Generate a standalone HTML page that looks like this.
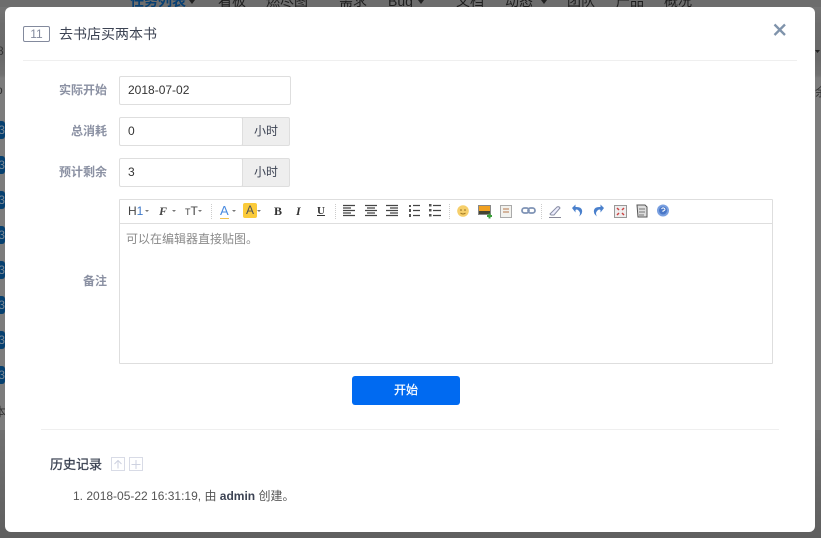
<!DOCTYPE html>
<html><head><meta charset="utf-8">
<style>
*{box-sizing:border-box}
html,body{margin:0;padding:0;width:821px;height:538px;overflow:hidden;background:#7b7b7b;font-family:"Liberation Sans","Noto Sans CJK SC",sans-serif;font-size:12px;color:#333}
.a{position:absolute;white-space:nowrap}
.nav{position:absolute;top:-9px;font-size:14px;color:#1e1e1e;line-height:20px;white-space:nowrap}
.badge{position:absolute;left:-14px;width:19px;height:18px;border-radius:3px;background:#06406f;color:#7b8794;font-size:12px;line-height:18px;text-align:right;padding-right:0}
.lab{position:absolute;width:48px;text-align:right;left:59px;color:#8b91a3;font-weight:bold;font-size:12px;line-height:18px;white-space:nowrap}
.inp{position:absolute;left:119px;height:29px;background:#fff;border:1px solid #dedede;border-radius:2px;padding-left:8px;line-height:26px;color:#333;font-size:12px}
.addon{position:absolute;left:242px;width:48px;height:29px;background:#eee;border:1px solid #dedede;border-radius:0 2px 2px 0;text-align:center;line-height:27px;color:#3c4353}
</style></head><body>
<div class="a" style="left:0;top:0;width:821px;height:430px;background:linear-gradient(#777 0,#6c6c6c 25px,#6a6a6a 60px,#717171 75px,#7c7c7c 78px,#7c7c7c 430px)"></div>
<div class="a" style="left:0;top:430px;width:821px;height:108px;background:linear-gradient(#707070,#5f5f5f)"></div>
<div class="a" style="left:0;top:0;width:821px;height:7px;background:#6d6d6d"></div>
<div class="nav" style="left:130px;color:#063f73;font-weight:bold">任务列表</div>
<div class="nav" style="left:218px">看板</div>
<div class="nav" style="left:266px">燃尽图</div>
<div class="nav" style="left:339px">需求</div>
<div class="nav" style="left:388px">Bug</div>
<div class="nav" style="left:456px">文档</div>
<div class="nav" style="left:505px">动态</div>
<div class="nav" style="left:567px">团队</div>
<div class="nav" style="left:616px">产品</div>
<div class="nav" style="left:664px">概况</div>
<svg class="a" style="left:0;top:0" width="821" height="7"><path d="M189 0h6l-3 4zM418 0h6l-3 4zM541 0h6l-3 4z" fill="#222"/></svg>
<div class="badge" style="top:121px">3</div><div class="badge" style="top:156px">3</div><div class="badge" style="top:191px">3</div><div class="badge" style="top:226px">3</div><div class="badge" style="top:261px">3</div><div class="badge" style="top:296px">3</div><div class="badge" style="top:331px">3</div><div class="badge" style="top:366px">3</div>
<div class="a" style="left:-3px;top:42px;font-size:12px;line-height:18px;color:#333">8</div>
<div class="a" style="left:-4px;top:81px;font-size:12px;line-height:18px;color:#333">p</div>
<div class="a" style="left:-6px;top:403px;font-size:12px;line-height:18px;color:#333">本</div>
<div class="a" style="left:815px;top:83px;font-size:12px;line-height:18px;color:#333">余</div>
<svg class="a" style="left:815px;top:50px" width="6" height="6"><path d="M0 0h5l-2.500 3z" fill="#222"/></svg>

<div class="a" style="left:5px;top:7px;width:810px;height:525px;background:#fff;border-radius:6px"></div>

<div class="a" style="left:23px;top:26px;width:27px;height:16px;border:1px solid #838a9d;border-radius:2px;text-align:center;line-height:14px;color:#838a9d;font-size:12px">11</div>
<div class="a" style="left:59px;top:25px;font-size:14px;line-height:18px;color:#3c4353">去书店买两本书</div>
<svg class="a" style="left:773px;top:23px" width="14" height="14" viewBox="0 0 14 14"><path d="M1.500 1.500 L12 12 M12 1.500 L1.500 12" stroke="#7f93ab" stroke-width="2.300" fill="none"/></svg>
<div class="a" style="left:23px;top:60px;width:774px;height:1px;background:#efefef"></div>

<div class="lab" style="top:81px">实际开始</div>
<div class="inp" style="top:76px;width:172px">2018-07-02</div>
<div class="lab" style="top:122px">总消耗</div>
<div class="inp" style="top:117px;width:124px">0</div><div class="addon" style="top:117px">小时</div>
<div class="lab" style="top:163px">预计剩余</div>
<div class="inp" style="top:158px;width:124px">3</div><div class="addon" style="top:158px">小时</div>
<div class="lab" style="top:272px">备注</div>

<div class="a" style="left:119px;top:199px;width:654px;height:165px;border:1px solid #dedede;border-radius:1px;background:#fff"></div>
<div class="a" style="left:120px;top:223px;width:652px;height:1px;background:#dedede"></div>
<div class="a" style="left:126px;top:230px;color:#8a8a8a;font-size:12px;line-height:18px">可以在编辑器直接贴图。</div>

<div class="a" style="left:128px;top:203px;font-size:12px;line-height:16px;color:#444">H<span style="color:#3d78c9">1</span></div>
<div class="a" style="left:159px;top:203px;font-size:12px;line-height:16px;color:#444;font-family:'Liberation Serif',serif;font-style:italic;font-weight:bold">F</div>
<div class="a" style="left:185px;top:203px;line-height:16px;color:#444"><span style="font-size:9px">T</span><span style="font-size:12px">T</span></div>
<div class="a" style="left:220px;top:203px;line-height:15px;font-size:13px;color:#4a8be0;border-bottom:1px solid #f2c14e;height:16px">A</div>
<div class="a" style="left:243px;top:203px;width:14px;height:15px;background:#fbcb3a;border-radius:2px;text-align:center;line-height:15px;font-size:12px;color:#555">A</div>
<div class="a" style="left:274px;top:203px;line-height:16px;font-size:12px;font-weight:bold;font-family:'Liberation Serif',serif;color:#333">B</div>
<div class="a" style="left:296px;top:203px;line-height:16px;font-size:12px;font-weight:bold;font-style:italic;font-family:'Liberation Serif',serif;color:#333">I</div>
<div class="a" style="left:317px;top:203px;line-height:16px;font-size:11px;font-weight:bold;font-family:'Liberation Serif',serif;color:#333;text-decoration:underline">U</div>

<svg class="a" style="left:120px;top:200px" width="652" height="23" viewBox="120 200 652 23">
 <g fill="#777"><path d="M145 210l4 0-2 2zM172 210l4 0-2 2zM198 210l4 0-2 2zM232 210l4 0-2 2zM257 210l4 0-2 2z"/></g>
 <g stroke="#ccc" stroke-dasharray="1 1" fill="none"><path d="M211.500 204V219M335.500 204V219M449.500 204V219M541.500 204V219"/></g>
 <g stroke="#444" stroke-width="1.200" fill="none">
  <path d="M343 205.500h12M343 208h8M343 210.500h12M343 213h8M343 215.500h12"/>
  <path d="M365 205.500h12M367 208h8M365 210.500h12M367 213h8M365 215.500h12"/>
  <path d="M386 205.500h12M390 208h8M386 210.500h12M390 213h8M386 215.500h12"/>
  <path d="M413 205.500h7M413 210.500h7M413 215.500h7"/>
  <path d="M433 205.500h8M433 210.500h8M433 215.500h8"/>
 </g>
 <g fill="#555"><rect x="409" y="205" width="2" height="2"/><rect x="409" y="209" width="2" height="3"/><rect x="409" y="214" width="2" height="3"/><rect x="429" y="204" width="2.500" height="2.500"/><rect x="429" y="209" width="2.500" height="2.500"/><rect x="429" y="214" width="2.500" height="2.500"/></g>
 <circle cx="463" cy="211" r="5.800" fill="#f6cf6b"/><circle cx="461" cy="210" r=".8" fill="#8a6a20"/><circle cx="465" cy="210" r=".8" fill="#8a6a20"/><path d="M460.500 213q2.500 2 5 0" stroke="#a07820" fill="none"/>
 <rect x="478" y="205" width="13" height="10" fill="#888"/><rect x="479" y="206" width="11" height="5" fill="#f0a020"/><rect x="479" y="211" width="11" height="3" fill="#443"/><path d="M487 216h5M489.500 213.500v5" stroke="#3aa03a" stroke-width="2"/>
 <rect x="500.500" y="205.500" width="11" height="12" fill="#f2f2ee" stroke="#aaa"/><path d="M503 209h6M503 212h6" stroke="#c9a080" stroke-width="1.500"/>
 <g fill="none" stroke="#7f93b5" stroke-width="1.800"><rect x="522" y="208" width="7" height="5" rx="2.500"/><rect x="528" y="208" width="7" height="5" rx="2.500"/></g>
 <path d="M550 214l7-7q2-1 3 1l-6 7h-3z" fill="#eef" stroke="#8a8fa5"/><path d="M549 217.500h12" stroke="#889"/>
 <path d="M572 208l3.500-3.500v2.500q5.500-.5 6.500 3t-3 6.500q2-3 0-5.500t-3.500-1v2.500z" fill="#4a80cc"/>
 <path d="M604 208l-3.500-3.500v2.500q-5.500-.5-6.500 3t3 6.500q-2-3 0-5.500t3.500-1v2.500z" fill="#4a80cc"/>
 <rect x="614.500" y="205.500" width="12" height="12" fill="#eee" stroke="#999"/><path d="M617 208l2 2M624 208l-2 2M617 215l2-2M624 215l-2-2" stroke="#c44" stroke-width="1.500"/>
 <path d="M637 205h8l2 2v10h-9z" fill="#ddd" stroke="#555"/><path d="M639 209h6M639 212h6M639 215h5" stroke="#777"/>
 <circle cx="663" cy="210.500" r="6" fill="#7aa0e0"/><circle cx="663" cy="210.500" r="4" fill="#4a78c8"/><path d="M661.500 209q1.500-2 3 -.5t-1.500 2.500v1" stroke="#fff" fill="none"/>
</svg>

<div class="a" style="left:352px;top:376px;width:108px;height:29px;background:#006af1;border-radius:3px;color:#fff;text-align:center;line-height:28px;font-size:12px;-webkit-text-stroke:.25px #fff">开始</div>
<div class="a" style="left:41px;top:429px;width:738px;height:1px;background:#efefef"></div>
<div class="a" style="left:50px;top:456px;font-size:13px;font-weight:normal;-webkit-text-stroke:.3px #3c4353;line-height:18px;color:#3c4353">历史记录</div>
<svg class="a" style="left:111px;top:457px" width="33" height="15" viewBox="0 0 33 15"><rect x=".5" y=".5" width="13" height="13" fill="#fff" stroke="#d8dbe6"/><rect x="18.500" y=".5" width="13" height="13" fill="#fff" stroke="#d8dbe6"/><path d="M7 11.500V3.500M3.500 7L7 3.500 10.500 7M25 3v9M20.500 7.500h9" stroke="#ced2e0" fill="none"/></svg>
<div class="a" style="left:73px;top:487px;line-height:18px;font-size:12px;color:#555">1. 2018-05-22 16:31:19, 由 <b style="color:#3c4353">admin</b> 创建。</div>
</body></html>
